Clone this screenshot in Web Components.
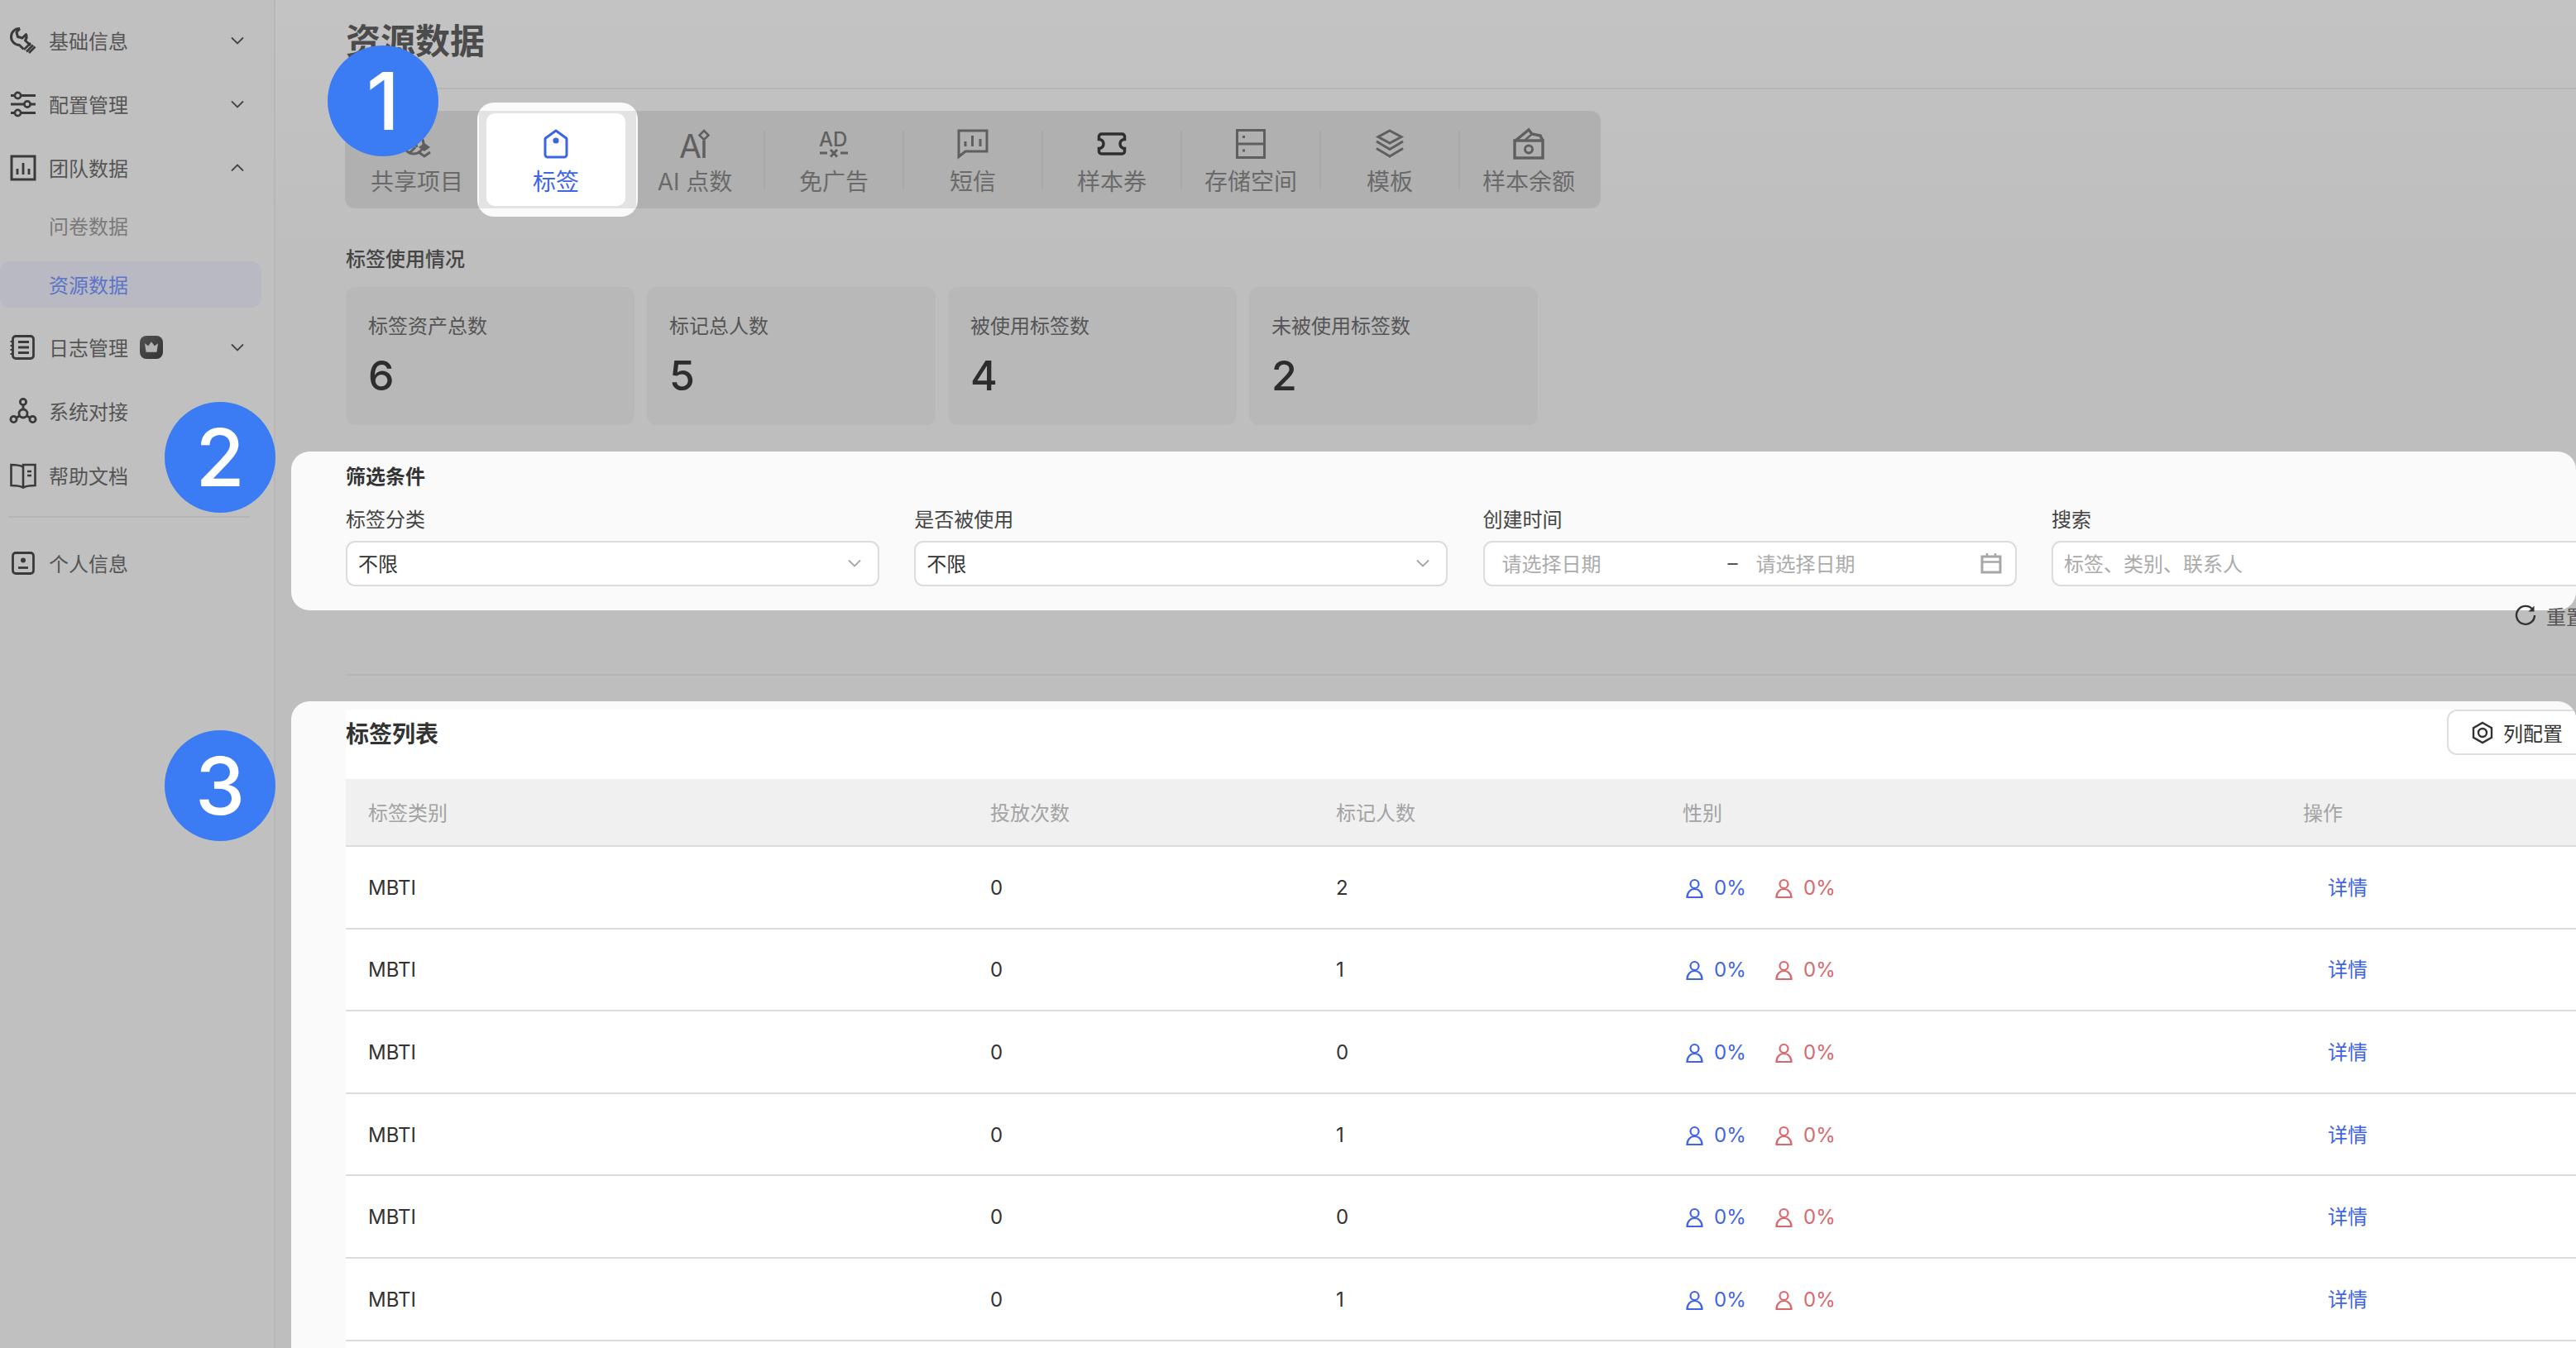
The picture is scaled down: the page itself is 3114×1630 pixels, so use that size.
<!DOCTYPE html>
<html lang="zh-CN">
<head>
<meta charset="utf-8">
<title>资源数据</title>
<style>
  html, body { margin: 0; padding: 0; background: #bfbfbf; }
  body {
    width: 3114px; height: 1630px; overflow: hidden;
    font-family: Inter, "Noto Sans CJK SC", sans-serif;
    font-size: 24px; color: #333;
  }
</style>
</head>
<body>

<app-shell>
  <side-nav slot="nav">
    <nav-item icon="wrench" chevron="down">基础信息</nav-item>
    <nav-item icon="sliders" chevron="down">配置管理</nav-item>
    <nav-item icon="chart" chevron="up">团队数据</nav-item>
    <nav-item sub style="margin-top:4px">问卷数据</nav-item>
    <nav-item sub active style="margin-top:15px">资源数据</nav-item>
    <nav-item icon="notebook" chevron="down" pro style="margin-top:9px">日志管理</nav-item>
    <nav-item icon="graph">系统对接</nav-item>
    <nav-item icon="book" style="margin-top:1px">帮助文档</nav-item>
    <nav-rule></nav-rule>
    <nav-item icon="idcard">个人信息</nav-item>
  </side-nav>

  <page-title>资源数据</page-title>

  <tab-bar>
    <tab-item icon="share">共享项目</tab-item>
    <tab-item icon="tag" active>标签</tab-item>
    <tab-item icon="ai">AI 点数</tab-item>
    <tab-item icon="ad">免广告</tab-item>
    <tab-item icon="sms">短信</tab-item>
    <tab-item icon="ticket">样本券</tab-item>
    <tab-item icon="storage">存储空间</tab-item>
    <tab-item icon="layers">模板</tab-item>
    <tab-item icon="money" last>样本余额</tab-item>
  </tab-bar>

  <stat-group heading="标签使用情况">
    <stat-card label="标签资产总数" value="6"></stat-card>
    <stat-card label="标记总人数" value="5"></stat-card>
    <stat-card label="被使用标签数" value="4"></stat-card>
    <stat-card label="未被使用标签数" value="2"></stat-card>
  </stat-group>

  <filter-panel heading="筛选条件">
    <filter-field label="标签分类" kind="select" value="不限"></filter-field>
    <filter-field label="是否被使用" kind="select" value="不限"></filter-field>
    <filter-field label="创建时间" kind="date" placeholder="请选择日期"></filter-field>
    <filter-field label="搜索" kind="search" placeholder="标签、类别、联系人"></filter-field>
  </filter-panel>

  <reset-row>重置</reset-row>
  <page-rule></page-rule>

  <tag-table heading="标签列表">
    <tag-row kind="MBTI" times="0" people="2"></tag-row>
    <tag-row kind="MBTI" times="0" people="1"></tag-row>
    <tag-row kind="MBTI" times="0" people="0"></tag-row>
    <tag-row kind="MBTI" times="0" people="1"></tag-row>
    <tag-row kind="MBTI" times="0" people="0"></tag-row>
    <tag-row kind="MBTI" times="0" people="1"></tag-row>
  </tag-table>

  <step-badge slot="badges" left="396" top="55">1</step-badge>
  <step-badge slot="badges" left="199" top="486">2</step-badge>
  <step-badge slot="badges" left="199" top="883">3</step-badge>
</app-shell>

<script>
'use strict';

(function() {
  // all icons are drawn with currentColor, size comes from the viewBox
  const svg = (w, h, body) =>
    `<svg width="${w}" height="${h}" viewBox="0 0 ${w} ${h}" fill="none" stroke="currentColor" stroke-width="3" overflow="visible">${body}</svg>`;

  const ICONS = {
    wrench: svg(32, 32, `<path d="M12 1.600C6 1 1.500 6 1.500 11.500 1.500 17 6 21.500 11.500 21.500L16.500 26.500M12 1.600 8 6l1.500 5.500L15 13l4.500-4.500c1.500 3.500.5 5.500-1 7.500l6.500 6" stroke-width="3" stroke-linejoin="round"/><path d="m17 27 8-8M20 29.500l8-8M23 31l7.500-7.500" stroke-width="2.600"/>`),
    sliders: svg(32, 32, `<path d="M1 5.500h30M1 16h30M1 26.500h30" stroke-width="3"/><circle cx="9.500" cy="5.500" r="3.600" fill="#c0c0c0" stroke-width="2.600"/><circle cx="21" cy="16" r="3.600" fill="#c0c0c0" stroke-width="2.600"/><circle cx="9.500" cy="26.500" r="3.600" fill="#c0c0c0" stroke-width="2.600"/>`),
    chart: svg(32, 32, `<rect x="2" y="2" width="28" height="28"/><path d="M9 17v7M16 10v14M23 17v7" stroke-width="2.800"/>`),
    notebook: svg(32, 32, `<rect x="3.500" y="2.500" width="25" height="27" rx="3.500" stroke-width="2.800"/><path d="M10 9.500h13M10 16h13M10 22.500h13" stroke-width="2.800"/><path d="M.5 9h3M.5 14h3M.5 19h3M.5 24h3" stroke-width="2"/>`),
    graph: svg(32, 32, `<circle cx="16" cy="5" r="3.600" stroke-width="2.800"/><circle cx="16" cy="19" r="5" stroke-width="2.800"/><circle cx="4.500" cy="26" r="3.600" stroke-width="2.800"/><circle cx="27.500" cy="26" r="3.600" stroke-width="2.800"/><path d="M16 9v5M8 24l4-2.500M24 24l-4-2.500" stroke-width="2.800"/>`),
    book: svg(32, 32, `<path d="M16 5.500C12 3.500 7 3 1.500 3v25c5.500 0 10.500.5 14.500 2.500 4-2 9-2.500 14.500-2.500V3H16v27" stroke-width="2.600"/><path d="M21 11h5M21 16h5" stroke-width="2.600"/>`),
    idcard: svg(32, 32, `<rect x="3.500" y="3.500" width="25" height="25" rx="3.500" stroke-width="2.800"/><circle cx="16" cy="12.500" r="3" fill="currentColor" stroke="none"/><path d="M10 21.500h12" stroke-width="2.800"/>`),
    chevronDown: svg(16, 10, `<path d="m1 1.500 7 7 7-7" stroke-width="1.800"/>`),
    chevronUp: svg(16, 10, `<path d="m1 8.500 7-7 7 7" stroke-width="1.800"/>`),
    share: svg(38, 36, `<circle cx="15" cy="18" r="12" stroke-width="3"/><path d="M15 10 11 22M15 10l4 12M10 29l7-7"/><path d="m28 17 7 5-7 5-7-5z" fill="currentColor" stroke="none"/><path d="m21 28 7 5 7-5"/>`),
    tag: svg(30, 36, `<path d="M15 2 26 10a3 3 0 0 1 2 3v18a3 3 0 0 1-3 3H5a3 3 0 0 1-3-3V13a3 3 0 0 1 2-3z" stroke-linejoin="round"/><circle cx="15" cy="14" r="3.600" fill="currentColor" stroke="none"/>`),
    ai: svg(38, 36, `<text x="0" y="35" font-family="Inter, sans-serif" font-size="39" font-weight="400" fill="currentColor" stroke="none">A</text><path d="M30 14v21" stroke-width="3.500"/><path d="m30 2 5.500 5.500L30 13l-5.500-5.500z" stroke-width="2.500"/>`),
    ad: svg(38, 36, `<text x="1" y="21" font-family="Inter, sans-serif" font-size="24" font-weight="500" fill="currentColor" stroke="none">AD</text><path d="M2 29h9M27 29h9M15 25l8 8.500M23 25l-8 8.500"/>`),
    sms: svg(38, 36, `<path d="M2 2h34v25H10l-8 6.500z"/><path d="M10 15v6M18.500 8v13M28 12v9"/>`),
    ticket: svg(36, 28, `<path d="M5.500 2h25a3 3 0 0 1 3 3v3.500a5.500 5.500 0 0 0 0 11V23a3 3 0 0 1-3 3h-25a3 3 0 0 1-3-3v-3.500a5.500 5.500 0 0 0 0-11V5a3 3 0 0 1 3-3z" stroke-width="3.500"/>`),
    storage: svg(36, 36, `<rect x="1.500" y="1.500" width="33" height="33"/><path d="M1.500 18h33"/><path d="M8 9.500h3M8 26h3"/>`),
    layers: svg(36, 36, `<path d="m18 2 14 7.500L18 17 4 9.500z"/><path d="m2 15 16 9.500L34 15M2 23.500l16 9.500 16-9.500"/>`),
    money: svg(38, 38, `<rect x="2" y="15" width="34" height="21" stroke-width="3.400"/><path d="M3 15 19 2l4 5 10 2 3 6" stroke-width="3.400"/><path d="m15 14 8-7" stroke-width="2.400"/><circle cx="19" cy="25.500" r="4.500"/>`),
    calendar: svg(26, 26, `<rect x="2" y="5" width="22" height="19"/><path d="M2 11.500h22M8 1v5M18 1v5" stroke-width="2.500"/>`),
    person: svg(21, 24, `<circle cx="10.500" cy="7" r="5" stroke-width="2.200"/><path d="M1.500 23c0-6 4-10 9-10s9 4 9 10z" stroke-width="2.200"/>`),
    reset: svg(26, 26, `<path d="M22 6.500A11 11 0 1 0 24 13" stroke-width="2.400"/><path d="M23.500 1.500v7h-7z" fill="currentColor" stroke="none"/>`),
    nut: svg(26, 28, `<path d="m13 2 11 6.300v11.400L13 26 2 19.700V8.300z" stroke-width="2.400"/><circle cx="13" cy="14" r="5" stroke-width="2.400"/>`),
    crown: `<svg width="16" height="13" viewBox="0 0 19 15"><path d="M0 2.500 5 6 9.500 0 14 6l5-3.500-1.800 12.500H1.800z" fill="#b4b4b4"/></svg>`
  };

  class Base extends HTMLElement {
    constructor(html) {
      super();
      // every element gets its own open shadow root
      this.attachShadow({ mode: 'open' }).innerHTML = html;
    }
  }

  class AppShell extends Base {
    constructor() {
      super(`
        <style>
          :host { display: flex; width: 3114px; height: 1630px; position: relative; overflow: hidden; }
          main {
            flex: 1; min-width: 0; padding-left: 85px; display: flex; flex-direction: column;
            background: linear-gradient(#c3c3c3, #bebebe 320px);
          }
        </style>
        <slot name="nav"></slot>
        <main><slot></slot></main>
        <slot name="badges"></slot>
      `);
    }
  }

  class SideNav extends Base {
    constructor() {
      super(`
        <style>
          :host {
            display: flex; flex-direction: column; flex: none; box-sizing: border-box; width: 333px;
            padding-top: 10px; background: #c0c0c0; border-right: 2px solid #b7b7b7;
          }
        </style>
        <slot></slot>
      `);
    }
  }

  class NavItem extends Base {
    constructor() {
      super(`
        <style>
          :host {
            display: flex; align-items: center; flex: none; height: 77px;
            padding: 0 36px 0 12px; color: #555;
          }
          :host([sub]) {
            box-sizing: border-box; height: 56px; padding-left: 59px; padding-bottom: 2px;
            margin-right: 15px; border-radius: 12px; color: #7a7a7a;
          }
          :host([active]) { background: #b8b9c2; color: #5c75c8; }
          .icon { width: 32px; height: 32px; margin-right: 15px; color: #3a3a3a; display: flex; }
          .chev { margin-left: auto; color: #444; display: flex; }
          .pro {
            width: 28px; height: 28px; margin-left: 14px; border-radius: 8px; display: flex;
            align-items: center; justify-content: center; background: linear-gradient(135deg, #525252, #333);
          }
        </style>
        <span class="icon" part="icon"></span><slot></slot><span class="chev"></span>
      `);
    }
    connectedCallback() {
      const icon = this.shadowRoot.querySelector('.icon');
      const name = this.getAttribute('icon');
      if (name) icon.innerHTML = ICONS[name]; else icon.remove();
      const chev = this.getAttribute('chevron');
      if (chev) this.shadowRoot.querySelector('.chev').innerHTML = chev === 'up' ? ICONS.chevronUp : ICONS.chevronDown;
      if (this.hasAttribute('pro')) {
        const pro = document.createElement('span');
        pro.className = 'pro';
        pro.innerHTML = ICONS.crown;
        this.shadowRoot.querySelector('slot').after(pro);
      }
    }
  }

  class NavRule extends Base {
    constructor() {
      super(`<style>:host { display: block; height: 2px; margin: 11px 29px 16px 10px; background: #b4b4b4; }</style>`);
    }
  }

  class PageTitle extends Base {
    constructor() {
      super(`
        <style>
          :host {
            display: flex; align-items: center; flex: none; box-sizing: border-box; height: 108px;
            padding-bottom: 14px; margin-bottom: 26px; border-bottom: 2px solid #b4b4b4;
            font-size: 42px; font-weight: 700; color: #4b4b4b;
          }
        </style>
        <slot></slot>
      `);
    }
  }

  class PageRule extends Base {
    constructor() {
      super(`<style>:host { display: block; flex: none; height: 2px; margin-top: 55px; background: #b4b4b4; }</style>`);
    }
  }

  class TabBar extends Base {
    constructor() {
      super(`
        <style>
          :host {
            display: flex; flex: none; align-self: flex-start; height: 118px; padding: 3px;
            box-sizing: border-box; margin-left: -1px; border-radius: 12px; background: #b0b0b0;
          }
        </style>
        <slot></slot>
      `);
    }
  }

  class TabItem extends Base {
    constructor() {
      super(`
        <style>
          :host {
            display: flex; flex-direction: column; align-items: center; width: 168px; height: 112px;
            box-sizing: border-box; padding-top: 19px; position: relative;
            font-size: 28px; color: #6a6a6a;
          }
          :host(:not([last]):not([active]))::after {
            content: ""; position: absolute; right: -1px; top: 21px; height: 70px; width: 2px; background: #a9a9a9;
          }
          .icon { height: 36px; display: flex; align-items: center; color: #5f5f5f; margin-bottom: 10px; }
          .text { line-height: 36px; white-space: nowrap; position: relative; }
          :host([icon="ticket"]) .icon { color: #2e2e2e; }
          :host([active]) { color: #3f64e8; z-index: 1; }
          :host([active]) .icon { color: #3c62e8; position: relative; }
          .card { position: absolute; inset: 0; border-radius: 10px; background: #fff; }
          .spot { position: absolute; left: -11px; right: -15px; top: -13px; bottom: -13px; border-radius: 20px; background: #fafafa; }
          .spot::after { content: ""; position: absolute; left: 2px; right: 2px; top: 10px; bottom: 10px; background: #e3e3e3; }
        </style>
        <span class="icon"></span><span class="text"><slot></slot></span>
      `);
    }
    connectedCallback() {
      this.shadowRoot.querySelector('.icon').innerHTML = ICONS[this.getAttribute('icon')];
      if (this.hasAttribute('active')) {
        // the spotlight around the active tab
        const back = document.createElement('span');
        back.innerHTML = '<span class="spot"></span><span class="card"></span>';
        this.shadowRoot.querySelector('.icon').before(back);
      }
    }
  }

  class StatGroup extends Base {
    constructor() {
      super(`
        <style>
          :host { display: block; flex: none; margin-top: 46px; }
          h3 { margin: 0 0 17px; font-size: 24px; line-height: 32px; font-weight: 500; color: #454545; }
          .row { display: flex; gap: 15px; }
        </style>
        <h3></h3>
        <div class="row"><slot></slot></div>
      `);
    }
    connectedCallback() {
      this.shadowRoot.querySelector('h3').textContent = this.getAttribute('heading');
    }
  }

  class StatCard extends Base {
    constructor() {
      super(`
        <style>
          :host {
            display: flex; flex-direction: column; box-sizing: border-box; width: 349px; height: 167px;
            padding: 32px 27px 0; border-radius: 12px; background: #b8b8b8;
          }
          .label { line-height: 32px; color: #555; }
          .value { margin-top: 13px; font-size: 50px; line-height: 60px; font-weight: 500; color: #2d2d2d; }
        </style>
        <div class="label"></div>
        <div class="value"></div>
      `);
    }
    connectedCallback() {
      this.shadowRoot.querySelector('.label').textContent = this.getAttribute('label');
      this.shadowRoot.querySelector('.value').textContent = this.getAttribute('value');
    }
  }

  class FilterPanel extends Base {
    constructor() {
      super(`
        <style>
          :host {
            display: block; flex: none; box-sizing: border-box; height: 192px; margin: 32px 0 0 -66px;
            padding: 15px 0 0 66px; border-radius: 22px; background: #fafafa; overflow: hidden;
          }
          h3 { margin: 0 0 20px; font-size: 24px; line-height: 32px; font-weight: 700; color: #333; }
          .grid { display: grid; grid-template-columns: repeat(4, 645px); column-gap: 42.300px; }
        </style>
        <h3></h3>
        <div class="grid"><slot></slot></div>
      `);
    }
    connectedCallback() {
      this.shadowRoot.querySelector('h3').textContent = this.getAttribute('heading');
    }
  }

  class FilterField extends Base {
    constructor() {
      super(`
        <style>
          :host { display: block; }
          .label { line-height: 32px; margin-bottom: 9px; color: #444; }
          .box {
            display: flex; align-items: center; box-sizing: border-box; height: 55px; padding: 0 13px 2px;
            border: 2px solid #dcdcdc; border-radius: 11px; background: #fff; color: #333;
          }
          .ph { color: #ababab; white-space: nowrap; }
          .end { margin-left: auto; display: flex; color: #a6a6a6; }
        </style>
        <div class="label"></div>
        <div class="box"></div>
      `);
    }
    connectedCallback() {
      this.shadowRoot.querySelector('.label').textContent = this.getAttribute('label');
      const box = this.shadowRoot.querySelector('.box');
      const kind = this.getAttribute('kind');
      const ph = this.getAttribute('placeholder');
      if (kind === 'select') {
        box.innerHTML = `<span>${this.getAttribute('value')}</span><span class="end" style="margin-right:7px">${ICONS.chevronDown}</span>`;
      } else if (kind === 'date') {
        box.innerHTML = `<span class="ph" style="margin-left:8px">${ph}</span>
          <span style="margin-left:153px;color:#555">–</span>
          <span class="ph" style="margin-left:22px">${ph}</span>
          <span class="end" style="margin-right:3px">${ICONS.calendar}</span>`;
      } else {
        box.innerHTML = `<span class="ph">${ph}</span>`;
      }
    }
  }

  class ResetRow extends Base {
    constructor() {
      super(`
        <style>
          :host {
            display: flex; align-items: center; flex: none; height: 32px; margin-top: -10px;
            padding-left: 2622px; position: relative; color: #555; white-space: nowrap;
          }
          .icon { display: flex; color: #333; margin-right: 12px; }
        </style>
        <span class="icon"></span><slot></slot>
      `);
      this.shadowRoot.querySelector('.icon').innerHTML = ICONS.reset;
    }
  }

  class TagTable extends Base {
    constructor() {
      super(`
        <style>
          :host {
            display: flex; flex-direction: column; flex: 1; min-height: 0; margin: 31px 0 0 -66px; padding: 10px 0 0 66px;
            border-radius: 22px 22px 0 0; background: #fafafa; overflow: hidden; position: relative;
          }
          .body { background: #fff; flex: 1; }
          .top { display: flex; justify-content: space-between; height: 84px; }
          h2 { margin: 14px 0 0; font-size: 28px; line-height: 32px; font-weight: 700; color: #333; }
          button {
            display: flex; align-items: center; box-sizing: border-box; width: 180px; height: 55px; margin: 0 -24px 0 0;
            padding: 0 0 0 28px; border: 2px solid #dedede; border-radius: 12px; background: #fff;
            font: inherit; color: #333; white-space: nowrap;
          }
          button svg { margin-right: 12px; }
          .head {
            display: grid; grid-template-columns: 752px 418px 419px 750px 1fr; box-sizing: border-box;
            height: 82px; padding: 0 0 2px 27px; align-items: center;
            background: #f0f0f0; border-bottom: 2px solid #dcdcdc; color: #a3a3a3;
          }
        </style>
        <div class="body">
          <div class="top"><h2></h2><button><span style="display:flex"></span>列配置</button></div>
          <div class="head"><span>标签类别</span><span>投放次数</span><span>标记人数</span><span>性别</span><span>操作</span></div>
          <slot></slot>
        </div>
      `);
    }
    connectedCallback() {
      this.shadowRoot.querySelector('h2').textContent = this.getAttribute('heading');
      this.shadowRoot.querySelector('button span').innerHTML = ICONS.nut;
    }
  }

  class TagRow extends Base {
    constructor() {
      super(`
        <style>
          :host {
            display: grid; grid-template-columns: 752px 418px 419px 750px 1fr; box-sizing: border-box;
            height: 99.600px; padding: 2px 0 0 27px; align-items: center; line-height: 32px;
            border-bottom: 2px solid #dcdcdc; color: #333;
          }
          .gender { display: flex; align-items: center; padding-left: 4px; }
          .gender svg { margin-right: 13px; }
          .m { color: #3f64e8; display: flex; align-items: center; width: 108px; }
          .f { color: #d9686c; display: flex; align-items: center; }
          a { color: #3f64e8; padding-left: 30px; }
        </style>
        <span class="kind"></span><span class="times"></span><span class="people"></span>
        <span class="gender"><span class="m"></span><span class="f"></span></span>
        <span><a>详情</a></span>
      `);
    }
    connectedCallback() {
      const root = this.shadowRoot;
      root.querySelector('.kind').textContent = this.getAttribute('kind');
      root.querySelector('.times').textContent = this.getAttribute('times');
      root.querySelector('.people').textContent = this.getAttribute('people');
      root.querySelector('.m').innerHTML = ICONS.person + '0%';
      root.querySelector('.f').innerHTML = ICONS.person + '0%';
    }
  }

  class StepBadge extends Base {
    constructor() {
      super(`
        <style>
          :host {
            position: absolute; z-index: 5; display: flex; align-items: center; justify-content: center;
            width: 134px; height: 134px; border-radius: 50%; background: #3b7cf4; color: #fff;
            font-family: Inter, sans-serif; font-size: 96px; font-weight: 500; line-height: 1;
          }
        </style>
        <slot></slot>
      `);
    }
    connectedCallback() {
      this.style.left = this.getAttribute('left') + 'px';
      this.style.top = this.getAttribute('top') + 'px';
    }
  }

  customElements.define('app-shell', AppShell);
  customElements.define('side-nav', SideNav);
  customElements.define('nav-item', NavItem);
  customElements.define('nav-rule', NavRule);
  customElements.define('page-title', PageTitle);
  customElements.define('page-rule', PageRule);
  customElements.define('tab-bar', TabBar);
  customElements.define('tab-item', TabItem);
  customElements.define('stat-group', StatGroup);
  customElements.define('stat-card', StatCard);
  customElements.define('filter-panel', FilterPanel);
  customElements.define('filter-field', FilterField);
  customElements.define('reset-row', ResetRow);
  customElements.define('tag-table', TagTable);
  customElements.define('tag-row', TagRow);
  customElements.define('step-badge', StepBadge);
})();
</script>
</body>
</html>
